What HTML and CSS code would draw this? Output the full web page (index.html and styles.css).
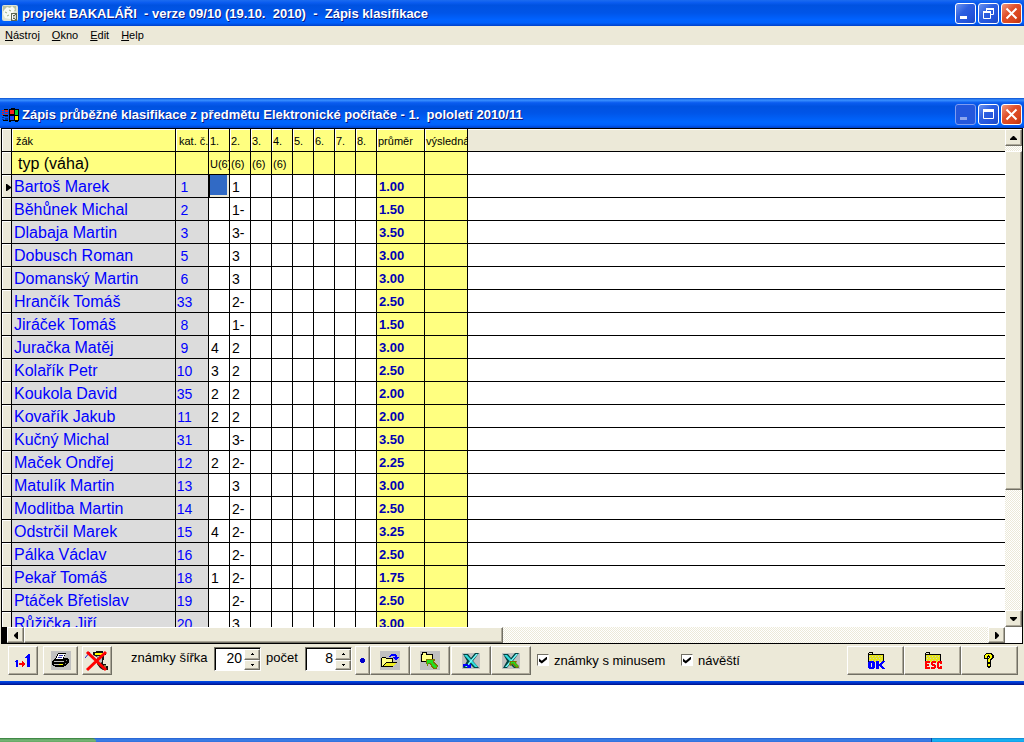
FILE: index.html
```html
<!DOCTYPE html>
<html lang="cs">
<head>
<meta charset="utf-8">
<title>Zápis klasifikace</title>
<link rel="stylesheet" href="styles.css">
</head>
<body>
<header class="titlebar">
  <svg class="app-icon" width="16" height="16" viewBox="0 0 16 16" aria-hidden="true"><rect width="16" height="16" rx="2" fill="#dfe3d2"/><path d="M1 1h13v5H1z" fill="#b8c2a4"/><path d="M2 5l3-3 3 1 2-2 3 3-2 4 1 4-4 2-5-1-2-4z" fill="#f8faf4"/><path d="M3 7l2 1M7 5l2 1M5 11l2-1" stroke="#9aaf86"/><path d="M9 8h6v8H9z" fill="#5c6652"/><path d="M10.500 9.500h2l1 1v1l-1 .5 1 .5v1l-1 1h-2zM11 12h2" fill="none" stroke="#fff"/></svg>
  <h1 class="title">projekt BAKALÁŘI&nbsp; - verze 09/10 (19.10.&nbsp; 2010)&nbsp; -&nbsp; Zápis klasifikace</h1>
  <div class="caption">
    <button class="cap" aria-label="Minimalizovat"><svg width="19" height="19"><path d="M4 12h7v3H4z" fill="#fff"/></svg></button>
    <button class="cap" aria-label="Obnovit"><svg width="19" height="19"><path d="M7.500 7V4.500h7v6H12" fill="none" stroke="#fff"/><path d="M7 4h8v2H7zM4 7h8v2H4z" fill="#fff"/><path d="M4.500 8.500h7v6h-7z" fill="none" stroke="#fff"/></svg></button>
    <button class="cap close" aria-label="Zavřít"><svg width="19" height="19"><path d="M4.500 4.500l10 10M14.500 4.500l-10 10" stroke="#fff" stroke-width="2"/></svg></button>
  </div>
</header>
<nav class="menu">
  <a href="#"><u>N</u>ástroj</a><a href="#"><u>O</u>kno</a><a href="#"><u>E</u>dit</a><a href="#"><u>H</u>elp</a>
</nav>
<main class="window">
  <div class="titlebar child">
    <svg class="app-icon" width="17" height="16" viewBox="0 0 17 16" shape-rendering="crispEdges" aria-hidden="true"><path d="M7 2h2V1h4v1h4v12h-1v1h-3v-1H9v1H7z" fill="#000"/><path d="M8 3h4v4H8z" fill="#f22"/><path d="M13 3h3v5h-3z" fill="#0c3"/><path d="M8 9h4v4H8z" fill="#24f"/><path d="M13 9h3v4h-3z" fill="#fe0"/><path d="M0 3h2v1H0zM3 3h3v2H3zM0 5h2v1H0zM3 6h3v1H3zM0 7h2v1H0z" fill="#d22"/><path d="M3 9h3v1H3zM0 10h2v1H0zM3 11h3v2H3zM0 12h2v1H0z" fill="#039"/><path d="M1 8h5v1H1zM1 13h5v1H1zM2 2h4v1H2z" fill="#000"/></svg>
    <h2 class="title">Zápis průběžné klasifikace z předmětu Elektronické počítače - 1.&nbsp; pololetí 2010/11</h2>
    <div class="caption">
      <button class="cap dim" aria-label="Minimalizovat"><svg width="19" height="19"><path d="M4 12h7v3H4z" fill="#8ea6ee"/></svg></button>
      <button class="cap" aria-label="Maximalizovat"><svg width="19" height="19"><path d="M4.500 5.500h10v8h-10z" fill="none" stroke="#fff"/><path d="M4 4h11v3H4z" fill="#fff"/></svg></button>
      <button class="cap close" aria-label="Zavřít"><svg width="19" height="19"><path d="M4.500 4.500l10 10M14.500 4.500l-10 10" stroke="#fff" stroke-width="2"/></svg></button>
    </div>
  </div>
  <section class="grid">
    <div class="sheet">
      <table class="marks">
        <colgroup><col class="c-gut"><col class="c-name"><col class="c-kat"><col class="c-mark" span="8"><col class="c-avg"><col class="c-res"><col></colgroup>
        <thead>
          <tr class="head"><td class="gut"><th>žák<th class="flush">kat. č.<th>1.<th>2.<th>3.<th>4.<th>5.<th>6.<th>7.<th>8.<th>průměr<th>výsledná<td class="rest">
          <tr class="kind"><td class="gut"><th>typ (váha)<td><td>U(6)<td>(6)<td>(6)<td>(6)<td><td><td><td><td><td><td class="rest">
        </thead>
        <tbody>
          <tr><td class="gut"><svg class="pointer" width="5" height="7" aria-hidden="true"><path d="M0 0h1l4 3v1L1 7H0z"/></svg><th>Bartoš Marek<td>1<td class="selected"><td>1<td><td><td><td><td><td><td>1.00<td><td>
          <tr><td class="gut"><th>Běhůnek Michal<td>2<td><td>1-<td><td><td><td><td><td><td>1.50<td><td>
          <tr><td class="gut"><th>Dlabaja Martin<td>3<td><td>3-<td><td><td><td><td><td><td>3.50<td><td>
          <tr><td class="gut"><th>Dobusch Roman<td>5<td><td>3<td><td><td><td><td><td><td>3.00<td><td>
          <tr><td class="gut"><th>Domanský Martin<td>6<td><td>3<td><td><td><td><td><td><td>3.00<td><td>
          <tr><td class="gut"><th>Hrančík Tomáš<td>33<td><td>2-<td><td><td><td><td><td><td>2.50<td><td>
          <tr><td class="gut"><th>Jiráček Tomáš<td>8<td><td>1-<td><td><td><td><td><td><td>1.50<td><td>
          <tr><td class="gut"><th>Juračka Matěj<td>9<td>4<td>2<td><td><td><td><td><td><td>3.00<td><td>
          <tr><td class="gut"><th>Kolařík Petr<td>10<td>3<td>2<td><td><td><td><td><td><td>2.50<td><td>
          <tr><td class="gut"><th>Koukola David<td>35<td>2<td>2<td><td><td><td><td><td><td>2.00<td><td>
          <tr><td class="gut"><th>Kovařík Jakub<td>11<td>2<td>2<td><td><td><td><td><td><td>2.00<td><td>
          <tr><td class="gut"><th>Kučný Michal<td>31<td><td>3-<td><td><td><td><td><td><td>3.50<td><td>
          <tr><td class="gut"><th>Maček Ondřej<td>12<td>2<td>2-<td><td><td><td><td><td><td>2.25<td><td>
          <tr><td class="gut"><th>Matulík Martin<td>13<td><td>3<td><td><td><td><td><td><td>3.00<td><td>
          <tr><td class="gut"><th>Modlitba Martin<td>14<td><td>2-<td><td><td><td><td><td><td>2.50<td><td>
          <tr><td class="gut"><th>Odstrčil Marek<td>15<td>4<td>2-<td><td><td><td><td><td><td>3.25<td><td>
          <tr><td class="gut"><th>Pálka Václav<td>16<td><td>2-<td><td><td><td><td><td><td>2.50<td><td>
          <tr><td class="gut"><th>Pekař Tomáš<td>18<td>1<td>2-<td><td><td><td><td><td><td>1.75<td><td>
          <tr><td class="gut"><th>Ptáček Břetislav<td>19<td><td>2-<td><td><td><td><td><td><td>2.50<td><td>
          <tr><td class="gut"><th>Růžička Jiří<td>20<td><td>3<td><td><td><td><td><td><td>3.00<td><td>
        </tbody>
      </table>
    </div>
    <div class="vscroll">
      <button class="raised arrow" aria-label="Nahoru"><svg width="7" height="4"><path d="M3 0h1l3 3v1H0V3z"/></svg></button>
      <div class="raised thumb"></div>
      <button class="raised arrow" aria-label="Dolů"><svg width="7" height="4"><path d="M0 0h7v1L4 4H3L0 1z"/></svg></button>
    </div>
    <div class="hscroll">
      <button class="raised arrow" aria-label="Vlevo"><svg width="4" height="7"><path d="M4 0v7H3L0 4V3l3-3z"/></svg></button>
      <div class="raised thumb"></div>
      <button class="raised arrow" aria-label="Vpravo"><svg width="4" height="7"><path d="M0 0v7h1l3-3V3L1 0z"/></svg></button>
    </div>
    <div class="corner"></div>
  </section>
  <form class="tools">
    <div class="left">
      <button type="button" class="raised btn small" aria-label="Přečíslovat"><svg width="18" height="16" viewBox="0 0 18 16" shape-rendering="crispEdges"><path d="M2 7h2v7H2v-5H1V8h1zM12 3h1V2h1V1h2v13h-3V5h-2V4h1z" fill="#00f"/><path d="M5 10h3V8h1v1h1v1h1v2h-1v1H9v1H8v-2H5z" fill="red"/></svg></button>
      <button type="button" class="raised btn medium" aria-label="Tisk"><svg width="20" height="19" viewBox="0 0 20 19" shape-rendering="crispEdges"><path d="M0 0h20v19H0z" fill="#c0c0c0"/><path d="M7 2h8v1h-1v2h-1v2h4v1h1v4h-1v1h-1v1h-1v1h-2v1H4v-1H2v-1H1v-4h1V9h1V8h1V7h1V5h1V3h1z" fill="#000"/><path d="M7 3h7v1h-1v2h-1v2H5V7h1V5h1z" fill="#fff"/><path d="M8 4h4v1H8zM7 6h4v1H7z" fill="#33a"/><path d="M3 10h10v1H3zM3 13h5v1H3z" fill="#c0c0c0"/><path d="M15 9h1v1h-1zM14 12h1v1h-1z" fill="#888"/><path d="M8 13h4v1H8z" fill="#ff0"/></svg></button>
      <button type="button" class="raised btn small" aria-label="Smazat"><svg width="24" height="22" viewBox="0 0 24 22"><path d="M8 2h3V1h7v2h3v2h-2v5h-1v4h3v2h2v4h-5l-3-2-3-4V7L8 5z" fill="#111"/><path d="M10 3h8v2h-8z" fill="#ff0"/><path d="M12 6h5v6l-3 2z" fill="#c0c0c0"/><path d="M19 15h2v3h-2z" fill="#887b42"/><path d="M0 8l5-6" stroke="#22c"/><path d="M2 2l19 18M21 2L2 20" stroke="#f00" stroke-width="3"/></svg></button>
      <label class="text first" for="width">známky šířka</label>
      <div class="spin"><input id="width" type="text" value="20"><div class="steps"><button type="button" class="raised" aria-label="Více"><svg width="3" height="2"><path d="M1 0h1v1h1v1H0V1h1z"/></svg></button><button type="button" class="raised" aria-label="Méně"><svg width="3" height="2"><path d="M0 0h3v1H2v1H1V1H0z"/></svg></button></div></div>
      <label class="text second" for="count">počet</label>
      <div class="spin"><input id="count" type="text" value="8"><div class="steps"><button type="button" class="raised" aria-label="Více"><svg width="3" height="2"><path d="M1 0h1v1h1v1H0V1h1z"/></svg></button><button type="button" class="raised" aria-label="Méně"><svg width="3" height="2"><path d="M0 0h3v1H2v1H1V1H0z"/></svg></button></div></div>
      <button type="button" class="raised btn tiny" aria-label="Bod"><svg width="5" height="5" shape-rendering="crispEdges"><path d="M1 0h3v1h1v3H4v1H1V4H0V1h1z" fill="#00c"/></svg></button>
      <div class="pair">
        <button type="button" class="raised btn wide" aria-label="Otevřít"><svg width="20" height="19" viewBox="0 0 20 19" shape-rendering="crispEdges"><path d="M0 0h20v19H0z" fill="#c0c0c0"/><path d="M1 7h1V6h4v1h7v4h4v1h-1v1h-1v1h-1v1h-1v1H1z" fill="#000"/><path d="M2 7h4v1h6v3H6v1H5v1H4v1H3v1H2z" fill="#ff8"/><path d="M6 12h10v1h-1v1h-1v1H4v-1h1v-1h1z" fill="#ee2"/><path d="M9 5h1V4h1V3h5v1h1v2h2v1h-1v1h-1v1h-2V8h-1V7h-1V6h2V5h-4v1H9z" fill="#00f"/></svg></button><button type="button" class="raised btn wide" aria-label="Uložit"><svg width="20" height="19" viewBox="0 0 20 19" shape-rendering="crispEdges"><path d="M0 0h20v19H0z" fill="#c0c0c0"/><path d="M1 3h1V1h5v2h6v8H1z" fill="#000"/><path d="M3 2h3v2h6v6H2V4h1z" fill="#ff8"/><path d="M6 8h9v2h-1l2 3 2 2v1h-1v2h-4l-2-3-2-2H8v2H7v-2H6z" fill="#7c7600"/><path d="M7 9h6v2l2 3 2 2h-1v1h-2l-2-3-2-2H8v1H7z" fill="#1fe01f"/></svg></button>
      </div>
      <div class="pair">
        <button type="button" class="raised btn wide" aria-label="Export do Excelu"><svg width="18" height="16" viewBox="0 0 18 16"><path d="M0 0h18v16H0z" fill="#c0c0c0"/><path d="M1 1h5l3 4 4-5h4l-6 8 6 7h-5l-4-4-3 4H1l4-7z" fill="#044"/><path d="M2 2h3l11 12h-3z" fill="#3dd"/><path d="M14 1h2L5 14H3z" fill="#7ff"/><path d="M1 11h5v1h2v-1h1v4H5v-1h1l-1-1H2v1H1z" fill="#00f"/></svg></button><button type="button" class="raised btn wide" aria-label="Import z Excelu"><svg width="18" height="16" viewBox="0 0 18 16"><path d="M0 0h18v16H0z" fill="#c0c0c0"/><path d="M1 1h5l3 4 4-5h4l-6 8 6 7h-5l-4-4-3 4H1l4-7z" fill="#044"/><path d="M2 2h3l11 12h-3z" fill="#3dd"/><path d="M14 1h2L5 14H3z" fill="#7ff"/><path d="M8 8h7l-1 2 3 3-1 2h-2l-4-4-1 2-2-1z" fill="#7c7600"/><path d="M9 9h4v1l3 3-1 1-4-4-2 1z" fill="#1fe01f"/></svg></button>
      </div>
      <label class="check minus"><input type="checkbox" checked>známky s minusem</label>
      <label class="check"><input type="checkbox" checked>návěští</label>
    </div>
    <div class="right">
      <button type="button" class="raised btn xl" aria-label="OK"><svg width="20" height="17" viewBox="0 0 20 17" shape-rendering="crispEdges"><path d="M2 1h1V0h4v2h11v13H2z" fill="#000"/><path d="M3 3h14v7H3z" fill="#e6e61a"/><path d="M3 4h1v1H3zM6 4h1v1H6zM9 4h1v1H9zM12 4h1v1h-1zM15 4h1v1h-1zM4 6h1v1H4zM7 6h1v1H7zM10 6h1v1h-1zM13 6h1v1h-1zM3 8h1v1H3zM6 8h1v1H6zM9 8h1v1H9zM12 8h1v1h-1zM15 8h1v1h-1z" fill="#ccc"/><path d="M3 1h3v1H3zM2 10h16v5H2z" fill="#ece9d8"/><path fill-rule="evenodd" d="M3 9h5v1h1v6H8v1H3v-1H2v-6h1zM5 11v4h1v-4zM10 9h3v3h1v-1h1v-1h1V9h3v1h-1v1h-1v1h-1v2h1v1h1v1h1v1h-3v-1h-1v-1h-1v-1h-1v3h-3z" fill="#00f"/></svg></button><button type="button" class="raised btn xl" aria-label="ESC"><svg width="20" height="17" viewBox="0 0 20 17" shape-rendering="crispEdges"><path d="M2 1h1V0h4v2h11v13H2z" fill="#000"/><path d="M3 3h14v7H3z" fill="#e6e61a"/><path d="M3 4h1v1H3zM6 4h1v1H6zM9 4h1v1H9zM12 4h1v1h-1zM15 4h1v1h-1zM4 6h1v1H4zM7 6h1v1H7zM10 6h1v1h-1zM13 6h1v1h-1zM3 8h1v1H3zM6 8h1v1H6zM9 8h1v1H9zM12 8h1v1h-1zM15 8h1v1h-1z" fill="#ccc"/><path d="M3 1h3v1H3zM2 10h16v5H2z" fill="#ece9d8"/><path d="M2 9h5v2H4v1h2v2H4v1h3v2H2zM9 9h4v2h-3v1h2v1h1v3h-1v1H8v-2h3v-1H9v-1H8v-3h1zM15 9h4v3h-2v-1h-1v4h1v-1h2v3h-4v-1h-1v-6h1z" fill="#f00"/></svg></button><button type="button" class="raised btn xl" aria-label="Nápověda"><svg width="11" height="15" viewBox="0 0 11 15" shape-rendering="crispEdges"><path d="M2 0h6v1h1v1h1v3H9v1H8v1H7v3H3V6h1V5h1V4H4v2H0V2h1V1h1zM3 10h4v4H6v1H4v-1H3z" fill="#000"/><path d="M2 1h5v1h1v3H7v1H6v3H4V6h1V5h1V3H5V2H4v1H3v2H1V2h1zM4 11h2v2H4z" fill="#ff0"/></svg></button>
    </div>
  </form>
</main>
<footer class="taskbar"><div class="start"></div><div class="tray"></div></footer>
</body>
</html>
```
FILE: styles.css
```css
* { box-sizing: border-box; }
body {
  margin: 0;
  height: 100vh;
  display: flex;
  flex-direction: column;
  overflow: hidden;
  background: #fff;
  color: #000;
  font: 11px "Liberation Sans", Arial, sans-serif;
}
button { margin: 0; padding: 0; font: inherit; }
svg { display: block; }

.titlebar {
  flex: none;
  display: flex;
  align-items: center;
  gap: 4px;
  height: 26px;
  padding: 0 2px;
  background: linear-gradient(#1c6cf0, #0a5cf0 10%, #0052e0 20%, #0055e8 50%, #0062ff 75%, #0060fc 88%, #0040c8);
}
.titlebar.child {
  gap: 3px;
  height: 30px;
  padding-top: 3px;
  background: linear-gradient(#0a50d0, #3a90ff 7%, #0a5cf0 16%, #0052e0 28%, #0055e8 50%, #0066ff 80%, #0060fc 90%, #0040c8);
}
.title {
  flex: 1;
  margin: 0;
  color: #fff;
  font: bold 13px "Liberation Sans", Arial, sans-serif;
  white-space: nowrap;
  text-shadow: 1px 1px #0a1883;
}
.caption { display: flex; gap: 2px; }
.cap {
  width: 21px;
  height: 21px;
  border: 1px solid #fff;
  border-radius: 3px;
  background: linear-gradient(135deg, #6b93f0, #2c5fe0 40%, #2455dc 70%, #1c48c4);
}
.cap.dim { border-color: #7f9cf0; background: #2457dc; }
.cap.close { background: linear-gradient(135deg, #f09a80, #e0502c 40%, #d8441c 75%, #b83210); }

.menu {
  flex: none;
  display: flex;
  gap: 12px;
  height: 19px;
  padding: 2px 5px;
  background: #ece9d8;
  line-height: 14px;
}
.menu a { color: #000; text-decoration: none; }

.window {
  flex: 1;
  min-height: 0;
  display: flex;
  flex-direction: column;
  margin: 53px 0;
  background: #ece9d8;
}
.window::after {
  content: "";
  flex: none;
  height: 4px;
  background: linear-gradient(#0050e8, #0030c8 50%, #001080);
}
.grid {
  flex: 1;
  min-height: 0;
  display: grid;
  grid-template: minmax(0, 1fr) 16px / minmax(0, 1fr) 17px;
  margin: 0 1px;
  border: 1px solid #000;
}
.sheet { overflow: hidden; background: #fff; }

.marks {
  width: 100%;
  table-layout: fixed;
  border-collapse: separate;
  border-spacing: 0;
}
.c-gut { width: 10px; }
.c-name { width: 164px; }
.c-kat { width: 33px; }
.c-mark { width: 21px; }
.c-avg { width: 48px; }
.c-res { width: 43px; }
.marks th, .marks td {
  height: 23px;
  padding: 2px 2px 0;
  overflow: hidden;
  border: solid #000;
  border-width: 0 1px 1px 0;
  font-weight: normal;
  line-height: 20px;
  text-align: left;
  white-space: nowrap;
}
.marks td:last-child { border-right: 0; }
.marks td.gut { padding: 0; background: #ece9d8; box-shadow: inset 1px 1px #fff; }
.pointer { margin: 2px 0 0 4px; }
.marks thead th, .marks thead td { padding: 1px 1px 0; background: #ffff80; }
.marks .head th { box-shadow: inset 1px 1px #fff; }
.marks .head th:nth-child(2) { padding-left: 4px; }
.marks .head .flush { padding-left: 3px; }
.marks .head .rest { background: #ece9d8; box-shadow: inset 0 1px #fff; }
.marks .kind th { padding: 2px 0 0 6px; font-size: 16px; }
.marks .kind .rest { background: #fff; }
.marks tbody { font-size: 14px; }
.marks tbody th { background: #dcdcdc; color: #00f; font-size: 16px; }
.marks tbody td:nth-child(3) {
  padding: 2px 15px 0 0;
  background: #dcdcdc;
  color: #00f;
  text-align: center;
}
.marks tbody td:nth-child(12) { background: #ffff80; color: #0000b4; font-size: 13px; font-weight: bold; }
.marks tbody td:nth-child(13) { background: #ffff80; }
.marks tbody .selected { background: #316ac5; box-shadow: inset 1px 0 #000, inset -2px -2px #ece9d8; }

.raised {
  border: 1px solid;
  border-color: #fff #716f64 #716f64 #fff;
  border-radius: 0;
  background: #ece9d8;
  box-shadow: inset -1px -1px #aca899;
  color: #000;
}
.vscroll, .hscroll { display: flex; background: repeating-conic-gradient(#fff 0 25%, #ece9d8 0 50%) 0 0 / 2px 2px; }
.vscroll { flex-direction: column; }
.arrow { flex: none; display: grid; place-items: center; width: 17px; height: 17px; }
.vscroll .thumb { height: 68%; margin-top: 5px; }
.vscroll .arrow:last-child { margin-top: auto; }
.hscroll { border-left: 5px solid #000; }
.hscroll .arrow { height: 16px; }
.hscroll .thumb { width: 48%; }
.hscroll .thumb { flex: 0 0 auto; min-width: 48%; }
.hscroll .arrow:last-child { margin-left: auto; }
.corner { background: #fff; }

.tools {
  flex: none;
  display: flex;
  justify-content: space-between;
  height: 37px;
  padding: 2px 6px 0 8px;
  font-size: 13px;
}
.left, .right, .pair { display: flex; align-items: flex-start; }
.btn { display: grid; place-items: center; height: 29px; }
.small { width: 30px; }
.medium { width: 35px; margin: 0 4px 0 5px; }
.tiny { width: 15px; margin-left: 3px; }
.wide { width: 40px; }
.xl { width: 57px; }
.pair + .pair { margin-left: 1px; }
.text { line-height: 24px; white-space: nowrap; }
.text.first { width: 102px; padding-left: 19px; }
.text.second { width: 44px; padding-left: 5px; }
.spin {
  display: flex;
  width: 47px;
  height: 24px;
  margin-top: 1px;
  border: 1px solid;
  border-color: #716f64 #fff #fff #716f64;
  background: #fff;
  box-shadow: inset 1px 1px #000;
}
.spin input {
  flex: 1;
  min-width: 0;
  padding: 0 2px 2px;
  border: 0;
  background: none;
  font: 14px "Liberation Sans", Arial, sans-serif;
  text-align: right;
}
.steps { display: grid; width: 16px; padding-top: 1px; }
.steps button { display: grid; place-items: center; }
.check { display: flex; align-items: center; gap: 5px; height: 28px; white-space: nowrap; }
.minus { width: 144px; }
.pair + .check { margin-left: 6px; }
.check input {
  display: grid;
  place-items: center;
  width: 12px;
  height: 12px;
  margin: 0;
  appearance: none;
  border: 1px solid;
  border-color: #716f64 #fff #fff #716f64;
  background: #fff;
}
.check input:checked::before {
  content: "";
  width: 8px;
  height: 7px;
  background: #000;
  clip-path: polygon(0 30%, 35% 60%, 100% 0, 100% 40%, 35% 100%, 0 70%);
}

.taskbar {
  flex: none;
  display: flex;
  justify-content: space-between;
  height: 4px;
  background: linear-gradient(#2460d0, #3c80e8 50%, #3070dc);
}
.start { width: 96px; border-radius: 0 4px 0 0; background: linear-gradient(#2f7a35, #7ab77a 50%, #62a862); }
.tray { width: 93px; border-left: 1px solid #0a4a9c; background: linear-gradient(#1080d0, #18b8f4 50%, #109ce8); }
```
